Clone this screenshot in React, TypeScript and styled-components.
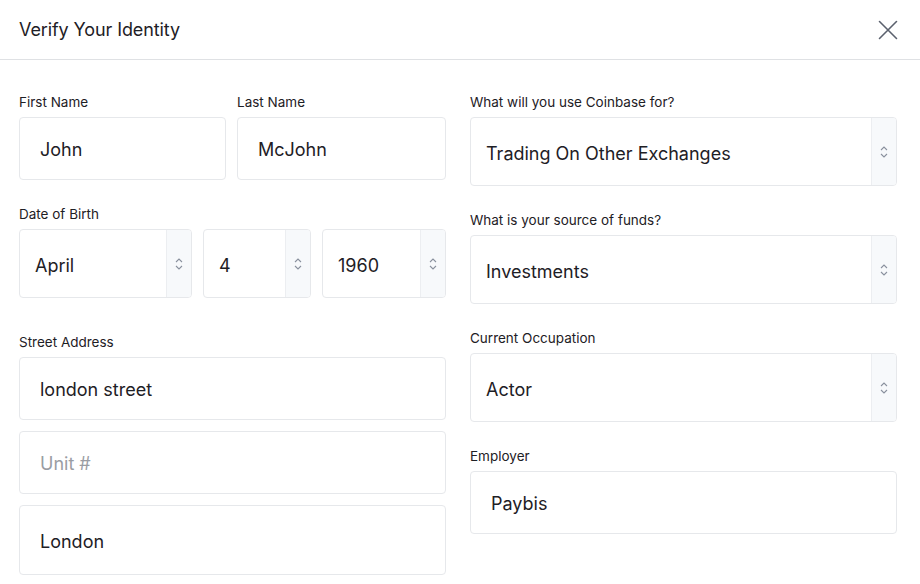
import React from 'react';
import styled, { createGlobalStyle } from 'styled-components';

const GlobalStyle = createGlobalStyle`
  html, body {
    margin: 0;
    padding: 0;
    background: #ffffff;
  }
  body {
    font-family: Inter, "Noto Sans", sans-serif;
    color: #1e2025;
  }
`;

const Modal = styled.div`
  width: 920px;
  height: 584px;
  background: #fff;
  overflow: hidden;
`;

const Header = styled.header`
  height: 59px;
  border-bottom: 1px solid #dfe1e4;
  display: flex;
  align-items: center;
  justify-content: space-between;
  padding: 0 22px 0 19px;
`;

const Title = styled.h1`
  margin: 0;
  font-size: 18px;
  font-weight: 400;
  color: #1e2025;
  letter-spacing: -0.1px;
`;

const CloseButton = styled.button`
  border: 0;
  background: none;
  padding: 0;
  width: 20px;
  height: 20px;
  display: flex;
  color: #5b616e;
  cursor: pointer;
`;

const Body = styled.div`
  display: grid;
  grid-template-columns: 427px 427px;
  column-gap: 24px;
  padding: 34px 23px 0 19px;
`;

const Column = styled.div`
  display: flex;
  flex-direction: column;
`;

const Field = styled.div<{ $gap?: number }>`
  display: flex;
  flex-direction: column;
  margin-bottom: ${p => p.$gap ?? 26}px;
`;

const Row = styled.div<{ $cols: string }>`
  display: grid;
  grid-template-columns: ${p => p.$cols};
  column-gap: 11px;
`;

const Label = styled.label`
  font-size: 13.5px;
  line-height: 16px;
  color: #1e2025;
  margin-bottom: 7px;
`;

const Stack = styled.div`
  display: flex;
  flex-direction: column;
  gap: 11px;
`;

const Input = styled.div<{ $placeholder?: boolean; $tall?: boolean }>`
  box-sizing: border-box;
  height: ${p => (p.$tall ? 70 : 63)}px;
  border: 1px solid #e6e8eb;
  border-radius: 4px;
  display: flex;
  align-items: center;
  padding: 2px 0 0 20px;
  font-size: 18px;
  color: ${p => (p.$placeholder ? '#9a9da3' : '#1e2025')};
`;

const Select = styled.div`
  box-sizing: border-box;
  height: 69px;
  border: 1px solid #e6e8eb;
  border-radius: 4px;
  display: flex;
  align-items: stretch;
  overflow: hidden;
`;

const SelectValue = styled.div`
  flex: 1;
  display: flex;
  align-items: center;
  padding: 3px 0 0 15px;
  font-size: 18px;
  color: #1e2025;
  white-space: nowrap;
`;

const Stepper = styled.div`
  width: 24px;
  flex: none;
  background: #f7f9fb;
  border-left: 1px solid #eceef1;
  display: flex;
  align-items: center;
  justify-content: center;
  color: #8a919e;
`;

const Chevrons = () => (
  <svg width="10" height="16" viewBox="0 0 10 16" fill="none" stroke="currentColor" strokeWidth="1.1">
    <path d="M2 6 L5 3 L8 6" />
    <path d="M2 10 L5 13 L8 10" />
  </svg>
);

const SelectBox = ({ value }: { value: string }) => (
  <Select>
    <SelectValue>{value}</SelectValue>
    <Stepper>
      <Chevrons />
    </Stepper>
  </Select>
);

export default function App() {
  return (
    <Modal>
      <GlobalStyle />
      <Header>
        <Title>Verify Your Identity</Title>
        <CloseButton aria-label="Close">
          <svg width="20" height="20" viewBox="0 0 20 20" stroke="currentColor" strokeWidth="1.6" strokeLinecap="round">
            <path d="M1.5 1.5 L18.5 18.5 M18.5 1.5 L1.5 18.5" />
          </svg>
        </CloseButton>
      </Header>
      <Body>
        <Column>
          <Row $cols="207px 209px">
            <Field>
              <Label>First Name</Label>
              <Input>John</Input>
            </Field>
            <Field>
              <Label>Last Name</Label>
              <Input>McJohn</Input>
            </Field>
          </Row>
          <Field $gap={36}>
            <Label>Date of Birth</Label>
            <Row $cols="173px 108px 124px">
              <SelectBox value="April" />
              <SelectBox value="4" />
              <SelectBox value="1960" />
            </Row>
          </Field>
          <Field>
            <Label>Street Address</Label>
            <Stack>
              <Input>london street</Input>
              <Input $placeholder>Unit #</Input>
              <Input $tall>London</Input>
            </Stack>
          </Field>
        </Column>
        <Column>
          <Field>
            <Label>What will you use Coinbase for?</Label>
            <SelectBox value="Trading On Other Exchanges" />
          </Field>
          <Field>
            <Label>What is your source of funds?</Label>
            <SelectBox value="Investments" />
          </Field>
          <Field>
            <Label>Current Occupation</Label>
            <SelectBox value="Actor" />
          </Field>
          <Field>
            <Label>Employer</Label>
            <Input>Paybis</Input>
          </Field>
        </Column>
      </Body>
    </Modal>
  );
}
